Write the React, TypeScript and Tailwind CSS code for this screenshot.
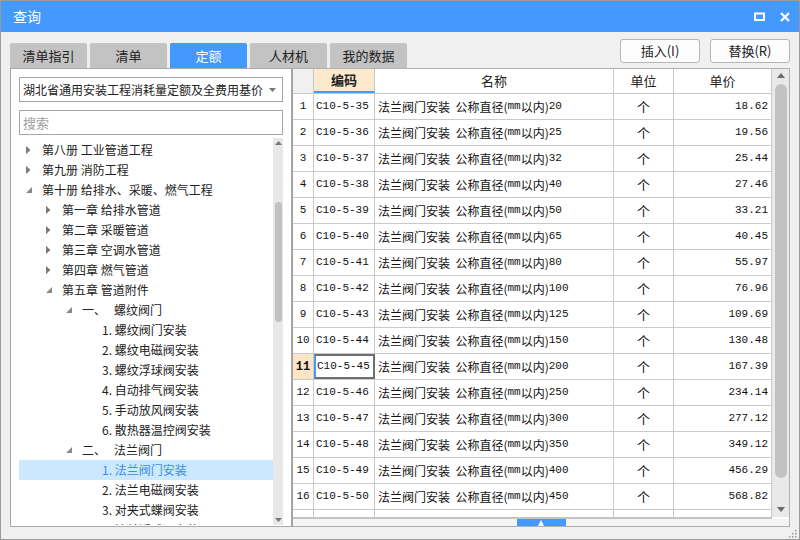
import React from 'react';

const sans = "font-['Noto_Sans_CJK_SC','Noto_Sans',sans-serif]";
const mono = "font-['Liberation_Mono','Noto_Sans_CJK_SC',monospace]";

const rows: [string, string, string][] = [
  ['C10-5-35', '20', '18.62'],
  ['C10-5-36', '25', '19.56'],
  ['C10-5-37', '32', '25.44'],
  ['C10-5-38', '40', '27.46'],
  ['C10-5-39', '50', '33.21'],
  ['C10-5-40', '65', '40.45'],
  ['C10-5-41', '80', '55.97'],
  ['C10-5-42', '100', '76.96'],
  ['C10-5-43', '125', '109.69'],
  ['C10-5-44', '150', '130.48'],
  ['C10-5-45', '200', '167.39'],
  ['C10-5-46', '250', '234.14'],
  ['C10-5-47', '300', '277.12'],
  ['C10-5-48', '350', '349.12'],
  ['C10-5-49', '400', '456.29'],
  ['C10-5-50', '450', '568.82'],
  ['C10-5-51', '500', '689.41'],
];

type Node = { level: number; arrow?: 'closed' | 'open'; text: string; selected?: boolean };

const tree: Node[] = [
  { level: 0, arrow: 'closed', text: '第八册 工业管道工程' },
  { level: 0, arrow: 'closed', text: '第九册 消防工程' },
  { level: 0, arrow: 'open', text: '第十册 给排水、采暖、燃气工程' },
  { level: 1, arrow: 'closed', text: '第一章 给排水管道' },
  { level: 1, arrow: 'closed', text: '第二章 采暖管道' },
  { level: 1, arrow: 'closed', text: '第三章 空调水管道' },
  { level: 1, arrow: 'closed', text: '第四章 燃气管道' },
  { level: 1, arrow: 'open', text: '第五章 管道附件' },
  { level: 2, arrow: 'open', text: '一、   螺纹阀门' },
  { level: 3, text: '1. 螺纹阀门安装' },
  { level: 3, text: '2. 螺纹电磁阀安装' },
  { level: 3, text: '3. 螺纹浮球阀安装' },
  { level: 3, text: '4. 自动排气阀安装' },
  { level: 3, text: '5. 手动放风阀安装' },
  { level: 3, text: '6. 散热器温控阀安装' },
  { level: 2, arrow: 'open', text: '二、   法兰阀门' },
  { level: 3, text: '1. 法兰阀门安装', selected: true },
  { level: 3, text: '2. 法兰电磁阀安装' },
  { level: 3, text: '3. 对夹式蝶阀安装' },
  { level: 3, text: '4. 法兰浮球阀安装' },
];

const indent = ['pl-0', 'pl-[20px]', 'pl-[40px]', 'pl-[60px]'];
const tabs = ['清单指引', '清单', '定额', '人材机', '我的数据'];

function Arrow({ kind }: { kind?: 'closed' | 'open' }) {
  if (kind === 'closed')
    return (
      <svg width="5" height="8" viewBox="0 0 5 8">
        <polygon points="0,0 4.5,4 0,8" fill="#7a7a7a" />
      </svg>
    );
  if (kind === 'open')
    return (
      <svg width="6" height="6" viewBox="0 0 6 6">
        <polygon points="6,0 6,6 0,6" fill="#8a8a8a" />
      </svg>
    );
  return null;
}

export default function App() {
  return (
    <div className={`w-[800px] h-[540px] flex flex-col border border-[#9a9a9a] bg-[#f0f0f0] overflow-hidden ${sans}`}>
      {/* title bar */}
      <div className="h-[31px] shrink-0 bg-[#4499ff] flex items-center pl-[12px] pr-[9px]">
        <span className="text-white text-[14px] flex-1">查询</span>
        <div className="flex items-center gap-[15px]">
          <svg width="11" height="9" viewBox="0 0 11 9">
            <rect x="1" y="1.5" width="9" height="6.5" fill="none" stroke="#fff" strokeWidth="2" />
          </svg>
          <svg width="10" height="10" viewBox="0 0 10 10">
            <path d="M1 1 L9 9 M9 1 L1 9" stroke="#fff" strokeWidth="2.2" />
          </svg>
        </div>
      </div>

      <div className="flex-1 flex flex-col px-[9px] pt-[7px] min-h-0">
        {/* tabs + buttons */}
        <div className="h-[29px] flex shrink-0">
          <div className="flex gap-[3px] items-end flex-1">
            {tabs.map((t) => (
              <div
                key={t}
                className={`w-[77px] h-[25px] flex items-center justify-center text-[13px] rounded-t-[2px] ${
                  t === '定额' ? 'bg-[#4499ff] text-white' : 'bg-[#c3c3c3] text-[#222]'
                }`}
              >
                {t}
              </div>
            ))}
          </div>
          <div className="flex gap-[10px] items-start">
            {['插入(I)', '替换(R)'].map((b) => (
              <div
                key={b}
                className="w-[80px] h-[24px] flex items-center justify-center text-[13px] text-[#222] bg-[#fdfdfd] border border-[#b5b5b5] rounded-[3px]"
              >
                {b}
              </div>
            ))}
          </div>
        </div>

        {/* main */}
        <div className="h-[459px] flex shrink-0">
          {/* left panel */}
          <div className="w-[282px] bg-white border border-[#a8a8a8] flex flex-col px-[8px] pt-[8px] pb-[1px]">
            <div className="h-[25px] border border-[#a6a6a6] flex items-center pl-[3px] pr-[6px] shrink-0">
              <span className="flex-1 overflow-hidden whitespace-nowrap text-[12px] text-[#222]">
                湖北省通用安装工程消耗量定额及全费用基价表
              </span>
              <svg width="7" height="4" viewBox="0 0 7 4" className="ml-[6px]">
                <polygon points="0,0 7,0 3.5,4" fill="#777" />
              </svg>
            </div>
            <div className="h-[25px] mt-[8px] border border-[#a6a6a6] flex items-center pl-[3px] shrink-0">
              <span className="text-[13px] text-[#a0a0a0]">搜索</span>
            </div>
            <div className="flex-1 flex mt-[3px] min-h-0">
              <div className="flex-1 overflow-hidden pt-[2px]">
                {tree.map((n, i) => (
                  <div
                    key={i}
                    className={`h-[20px] flex items-center ${indent[n.level]} ${n.selected ? 'bg-[#cce8ff]' : ''}`}
                  >
                    <div className="w-[23px] pl-[7px] flex items-center shrink-0">
                      <Arrow kind={n.arrow} />
                    </div>
                    <span
                      className={`text-[12px] whitespace-pre ${n.selected ? 'text-[#3d8ee6]' : 'text-[#222]'}`}
                    >
                      {n.text}
                    </span>
                  </div>
                ))}
              </div>
              {/* tree scrollbar */}
              <div className="w-[10px] bg-[#e8e8e8] flex flex-col items-center py-[3px]">
                <svg width="7" height="4" viewBox="0 0 7 4">
                  <polygon points="0,4 7,4 3.5,0" fill="#777" />
                </svg>
                <div className="mt-[57px] w-[7px] h-[120px] rounded-full bg-[#c1c1c1]" />
                <div className="flex-1" />
                <svg width="7" height="4" viewBox="0 0 7 4">
                  <polygon points="0,0 7,0 3.5,4" fill="#777" />
                </svg>
              </div>
            </div>
          </div>

          {/* right table */}
          <div className="flex-1 border border-[#b0b0b0] border-l-[#a0a0a0] bg-white flex flex-col min-w-0">
            <div className="h-[448px] flex">
              <div className="w-[478px] overflow-hidden">
                {/* header */}
                <div className="h-[25px] flex border-b border-[#c9c9c9] text-[13px] text-[#222]">
                  <div className="w-[21px] bg-[#f0f0f0] border-r border-[#c9c9c9]" />
                  <div className="w-[61px] bg-[#fde9cb] border-r border-[#c9c9c9] border-b-2 border-b-[#4499ff] flex items-center justify-center font-bold">
                    编码
                  </div>
                  <div className="w-[239px] border-r border-[#c9c9c9] flex items-center justify-center">名称</div>
                  <div className="w-[60px] border-r border-[#c9c9c9] flex items-center justify-center">单位</div>
                  <div className="w-[97px] flex items-center justify-center">单价</div>
                </div>
                {rows.map(([code, dn, price], i) => {
                  const sel = i === 10;
                  return (
                    <div key={code} className="h-[26px] flex border-b border-[#c9c9c9] text-[#111]">
                      <div
                        className={`w-[21px] border-r border-[#c9c9c9] flex items-center justify-center ${mono} ${
                          sel ? 'bg-[#fde4c4] font-bold text-[12px]' : 'text-[11px]'
                        }`}
                      >
                        {i + 1}
                      </div>
                      <div
                        className={`w-[61px] flex items-center text-[11px] ${mono} ${
                          sel
                            ? 'border-2 border-[#6e6e6e] border-l-[#4499ff] pl-[1px]'
                            : 'border-r border-[#c9c9c9] pl-[2px]'
                        }`}
                      >
                        {code}
                      </div>
                      <div className={`w-[239px] border-r border-[#c9c9c9] flex items-center pl-[3px] text-[12px] whitespace-pre ${sans}`}>
                        法兰阀门安装  公称直径(<span className={`${mono} text-[11px]`}>mm</span>以内)
                        <span className={`${mono} text-[11px]`}>{dn}</span>
                      </div>
                      <div className="w-[60px] border-r border-[#c9c9c9] flex items-center justify-center text-[13px]">个</div>
                      <div className={`w-[97px] flex items-center justify-end pr-[3px] text-[11px] ${mono}`}>{price}</div>
                    </div>
                  );
                })}
              </div>
              {/* vertical scrollbar */}
              <div className="flex-1 bg-[#e9e9e9] border-l border-[#c9c9c9] flex flex-col items-center pt-[4px] pb-[5px]">
                <svg width="8" height="5" viewBox="0 0 8 5">
                  <polygon points="0,5 8,5 4,0" fill="#6a6a6a" />
                </svg>
                <div className="mt-[6px] w-[12px] h-[394px] rounded-full bg-[#c2c2c2]" />
                <div className="flex-1" />
                <svg width="8" height="5" viewBox="0 0 8 5">
                  <polygon points="0,0 8,0 4,5" fill="#6a6a6a" />
                </svg>
              </div>
            </div>
            {/* splitter bar */}
            <div className="flex-1 flex flex-col">
              <div className="h-[2px] bg-[#c4c4c4] mr-[17px]" />
              <div className="flex-1 bg-[#f4f4f4] flex justify-center">
                <div className="w-[49px] h-[7px] bg-[#4499ff] flex items-end justify-center">
                  <svg width="6" height="6" viewBox="0 0 6 6">
                    <polygon points="0,6 6,6 3,0" fill="#fff" />
                  </svg>
                </div>
              </div>
            </div>
          </div>
        </div>

        {/* bottom strip */}
        <div className="flex-1 flex justify-end items-end">
          <svg width="9" height="9" viewBox="0 0 9 9" className="mb-[1px] -mr-[7px]">
            <g fill="#9a9a9a">
              <rect x="7" y="1" width="1.5" height="1.5" />
              <rect x="4" y="4" width="1.5" height="1.5" />
              <rect x="7" y="4" width="1.5" height="1.5" />
              <rect x="1" y="7" width="1.5" height="1.5" />
              <rect x="4" y="7" width="1.5" height="1.5" />
              <rect x="7" y="7" width="1.5" height="1.5" />
            </g>
          </svg>
        </div>
      </div>
    </div>
  );
}
